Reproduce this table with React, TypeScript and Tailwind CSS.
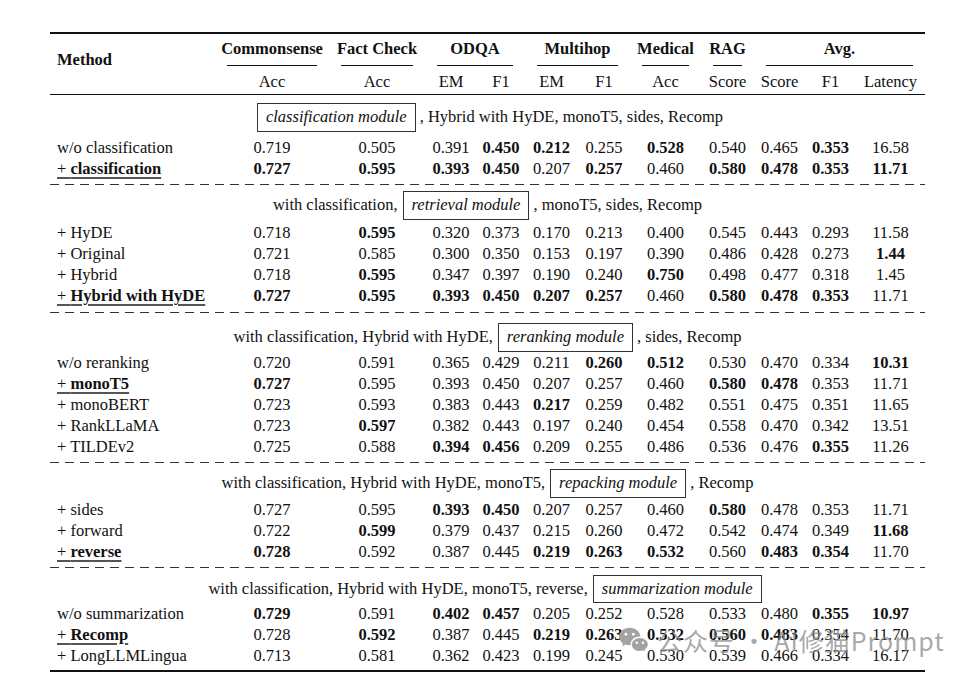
type Cell = string | [string];

type Row = {
  label: string;
  best?: boolean;
  cells: Cell[];
};

type Section = {
  pre: string;
  box: string;
  post: string;
  pt: string;
  boxH: string;
  gapBox: string;
  gapEnd: string;
  rows: Row[];
};

const cols =
  "grid grid-cols-[165px_114px_96px_52px_48px_53px_52px_71px_53px_51px_51px_69px]";

const sections: Section[] = [
  {
    pre: "",
    box: "classification module",
    post: ", Hybrid with HyDE, monoT5, sides, Recomp",
    pt: "pt-[8px]",
    boxH: "h-[29px]",
    gapBox: "mb-[5px]",
    gapEnd: "mt-[5px]",
    rows: [
      {
        label: "w/o classification",
        cells: ["0.719", "0.505", "0.391", ["0.450"], ["0.212"], "0.255", ["0.528"], "0.540", "0.465", ["0.353"], "16.58"],
      },
      {
        label: "classification",
        best: true,
        cells: [["0.727"], ["0.595"], ["0.393"], ["0.450"], "0.207", ["0.257"], "0.460", ["0.580"], ["0.478"], ["0.353"], ["11.71"]],
      },
    ],
  },
  {
    pre: "with classification,",
    box: "retrieval module",
    post: ", monoT5, sides, Recomp",
    pt: "pt-[6px]",
    boxH: "h-[29px]",
    gapBox: "mb-[2px]",
    gapEnd: "mt-[6px]",
    rows: [
      { label: "+ HyDE", cells: ["0.718", ["0.595"], "0.320", "0.373", "0.170", "0.213", "0.400", "0.545", "0.443", "0.293", "11.58"] },
      { label: "+ Original", cells: ["0.721", "0.585", "0.300", "0.350", "0.153", "0.197", "0.390", "0.486", "0.428", "0.273", ["1.44"]] },
      { label: "+ Hybrid", cells: ["0.718", ["0.595"], "0.347", "0.397", "0.190", "0.240", ["0.750"], "0.498", "0.477", "0.318", "1.45"] },
      {
        label: "Hybrid with HyDE",
        best: true,
        cells: [["0.727"], ["0.595"], ["0.393"], ["0.450"], ["0.207"], ["0.257"], "0.460", ["0.580"], ["0.478"], ["0.353"], "11.71"],
      },
    ],
  },
  {
    pre: "with classification, Hybrid with HyDE,",
    box: "reranking module",
    post: ", sides, Recomp",
    pt: "pt-[10px]",
    boxH: "h-[29px]",
    gapBox: "mb-0",
    gapEnd: "mt-[5px]",
    rows: [
      { label: "w/o reranking", cells: ["0.720", "0.591", "0.365", "0.429", "0.211", ["0.260"], ["0.512"], "0.530", "0.470", "0.334", ["10.31"]] },
      { label: "monoT5", best: true, cells: [["0.727"], "0.595", "0.393", "0.450", "0.207", "0.257", "0.460", ["0.580"], ["0.478"], "0.353", "11.71"] },
      { label: "+ monoBERT", cells: ["0.723", "0.593", "0.383", "0.443", ["0.217"], "0.259", "0.482", "0.551", "0.475", "0.351", "11.65"] },
      { label: "+ RankLLaMA", cells: ["0.723", ["0.597"], "0.382", "0.443", "0.197", "0.240", "0.454", "0.558", "0.470", "0.342", "13.51"] },
      { label: "+ TILDEv2", cells: ["0.725", "0.588", ["0.394"], ["0.456"], "0.209", "0.255", "0.486", "0.536", "0.476", ["0.355"], "11.26"] },
    ],
  },
  {
    pre: "with classification, Hybrid with HyDE, monoT5,",
    box: "repacking module",
    post: ", Recomp",
    pt: "pt-[6px]",
    boxH: "h-[29px]",
    gapBox: "mb-[1px]",
    gapEnd: "mt-[5px]",
    rows: [
      { label: "+ sides", cells: ["0.727", "0.595", ["0.393"], ["0.450"], "0.207", "0.257", "0.460", ["0.580"], "0.478", "0.353", "11.71"] },
      { label: "+ forward", cells: ["0.722", ["0.599"], "0.379", "0.437", "0.215", "0.260", "0.472", "0.542", "0.474", "0.349", ["11.68"]] },
      { label: "reverse", best: true, cells: [["0.728"], "0.592", "0.387", "0.445", ["0.219"], ["0.263"], ["0.532"], "0.560", ["0.483"], ["0.354"], "11.70"] },
    ],
  },
  {
    pre: "with classification, Hybrid with HyDE, monoT5, reverse,",
    box: "summarization module",
    post: "",
    pt: "pt-[7px]",
    boxH: "h-[28px]",
    gapBox: "mb-0",
    gapEnd: "mt-[4px]",
    rows: [
      { label: "w/o summarization", cells: [["0.729"], "0.591", ["0.402"], ["0.457"], "0.205", "0.252", "0.528", "0.533", "0.480", ["0.355"], ["10.97"]] },
      { label: "Recomp", best: true, cells: ["0.728", ["0.592"], "0.387", "0.445", ["0.219"], ["0.263"], ["0.532"], ["0.560"], ["0.483"], "0.354", "11.70"] },
      { label: "+ LongLLMLingua", cells: ["0.713", "0.581", "0.362", "0.423", "0.199", "0.245", "0.530", "0.539", "0.466", "0.334", "16.17"] },
    ],
  },
];

const groups = [
  { name: "Commonsense", span: "col-span-1" },
  { name: "Fact Check", span: "col-span-1" },
  { name: "ODQA", span: "col-span-2" },
  { name: "Multihop", span: "col-span-2" },
  { name: "Medical", span: "col-span-1" },
  { name: "RAG", span: "col-span-1" },
  { name: "Avg.", span: "col-span-3" },
];

const metrics = ["Acc", "Acc", "EM", "F1", "EM", "F1", "Acc", "Score", "Score", "F1", "Latency"];

function Dashed() {
  return <div className="h-px w-full bg-[repeating-linear-gradient(90deg,#333_0_9px,transparent_9px_15px)]" />;
}

function Header() {
  return (
    <div className={`${cols} grid-rows-[31px_1px_28px]`}>
      <div className="row-span-3 flex items-center pb-[8px] pl-[7px] font-bold">Method</div>
      {groups.map((g) => (
        <div key={g.name} className={`${g.span} flex items-center justify-center font-bold`}>
          {g.name}
        </div>
      ))}
      {groups.map((g) => (
        <div key={g.name + "-rule"} className={`${g.span} mx-3 h-px bg-[#111]`} />
      ))}
      {metrics.map((m, i) => (
        <div key={i} className="flex items-center justify-center pt-[5px]">
          {m}
        </div>
      ))}
    </div>
  );
}

function DataRow({ row }: { row: Row }) {
  return (
    <div className={`${cols} h-[21px] leading-[21px]`}>
      <div className="pl-[7px] whitespace-nowrap">
        {row.best ? (
          <span className="underline decoration-[#555] decoration-2 underline-offset-[3px]">
            + <span className="font-bold">{row.label}</span>
          </span>
        ) : (
          row.label
        )}
      </div>
      {row.cells.map((c, i) =>
        typeof c === "string" ? (
          <div key={i} className="text-center">
            {c}
          </div>
        ) : (
          <div key={i} className="text-center font-bold">
            {c[0]}
          </div>
        )
      )}
    </div>
  );
}

function Block({ s, last }: { s: Section; last: boolean }) {
  return (
    <div className="flex flex-col">
      <div className={`${s.pt} ${s.gapBox} flex items-center justify-center whitespace-nowrap`}>
        {s.pre && <span>{s.pre}</span>}
        <span className={`${s.boxH} mx-[5px] flex items-center border border-[#333] px-[8px] italic`}>{s.box}</span>
        {s.post && <span className="-ml-[1px]">{s.post}</span>}
      </div>
      {s.rows.map((r) => (
        <DataRow key={r.label} row={r} />
      ))}
      <div className={s.gapEnd} />
      {last ? <div className="h-[2px] bg-[#111]" /> : <Dashed />}
    </div>
  );
}

function WeChat() {
  return (
    <svg width="32" height="28" viewBox="0 0 30 26" className="shrink-0">
      <path d="M11 1.5C5.5 1.5 1 5.2 1 9.8c0 2.6 1.4 4.9 3.6 6.4L3.8 19l3.3-1.7c1.2.4 2.5.6 3.9.6 5.5 0 10-3.7 10-8.1S16.5 1.5 11 1.5z" fill="#a3a3a3" />
      <circle cx="7.4" cy="7.6" r="1.3" fill="#fff" />
      <circle cx="14.4" cy="7.6" r="1.3" fill="#fff" />
      <path d="M20.5 10.5c-4.6 0-8.3 3-8.3 6.8s3.7 6.8 8.3 6.8c1 0 2-.2 2.9-.5l2.8 1.4-.7-2.4c1.9-1.3 3.2-3.1 3.2-5.3 0-3.8-3.7-6.8-8.2-6.8z" fill="#a3a3a3" stroke="#fff" strokeWidth="1.4" />
      <circle cx="17.6" cy="15.6" r="1.1" fill="#fff" />
      <circle cx="23.4" cy="15.6" r="1.1" fill="#fff" />
    </svg>
  );
}

export default function App() {
  return (
    <div className="relative h-[682px] w-[975px] overflow-hidden bg-white pl-[50px] pt-[32px] font-['Liberation_Serif',serif] text-[16.5px] text-[#111]">
      <div className="w-[875px]">
        <div className="h-[2px] bg-[#111]" />
        <Header />
        <div className="h-px bg-[#111]" />
        {sections.map((s, i) => (
          <Block key={s.box} s={s} last={i === sections.length - 1} />
        ))}
      </div>
      <div className="absolute left-[618px] top-[626px] flex items-center gap-[7px] font-['Noto_Sans_CJK_SC','Noto_Sans',sans-serif] text-[25px] leading-none tracking-[1px] text-[#8c8c8c]/75">
        <WeChat />
        <span>公众号 · AI修猫Prompt</span>
      </div>
    </div>
  );
}
